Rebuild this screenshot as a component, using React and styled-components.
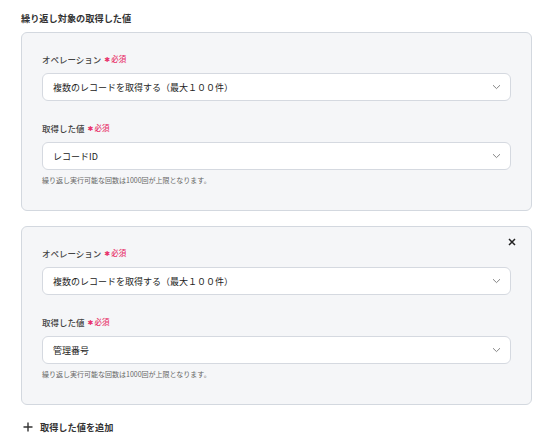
import styled, {createGlobalStyle} from "styled-components";

const GlobalStyle = createGlobalStyle`
  body {
    margin: 0;
    background: #fff;
    font-family: "Noto Sans CJK JP", "Noto Sans", sans-serif;
    color: #333;
  }
`;

const Page = styled.div`
  padding: 12px 19px 0 21px;
`;

const Title = styled.div`
  font-size: 9.2px;
  line-height: 12px;
  font-weight: 600;
  color: #333;
  margin-bottom: 8px;
`;

const Card = styled.div`
  position: relative;
  border: 1px solid #d3d8df;
  border-radius: 6px;
  background: #f5f6f8;
  padding: 20px 20px 25px 20px;
  display: flex;
  flex-direction: column;
  gap: 21px;
  & + & {
    margin-top: 15px;
  }
`;

const CloseButton = styled.button`
  position: absolute;
  top: 9px;
  right: 13px;
  width: 12px;
  height: 12px;
  padding: 0;
  border: none;
  background: none;
  display: flex;
  align-items: center;
  justify-content: center;
  cursor: pointer;
`;

const Field = styled.div`
  display: flex;
  flex-direction: column;
`;

const Label = styled.div`
  display: flex;
  align-items: center;
  font-size: 8.5px;
  line-height: 12px;
  font-weight: 500;
  color: #444;
  margin-bottom: 8px;
`;

const Required = styled.span`
  color: #e8336b;
  font-size: 7.5px;
  margin-left: 3px;
  display: flex;
  align-items: center;
  gap: 1px;
`;

const Asterisk = styled.span`
  font-family: "DejaVu Sans", sans-serif;
  font-size: 7px;
  line-height: 10px;
  position: relative;
  top: 0.5px;
`;

const Select = styled.div`
  height: 28px;
  box-sizing: border-box;
  border: 1px solid #d5d9e0;
  border-radius: 6px;
  background: #fff;
  display: flex;
  align-items: center;
  justify-content: space-between;
  padding: 0 9px 0 10px;
  font-size: 9px;
  color: #222;
`;

const Help = styled.div`
  font-size: 7px;
  line-height: 10px;
  color: #666;
  margin-top: 5px;
`;

const AddButton = styled.button`
  margin-top: 16px;
  display: flex;
  align-items: center;
  gap: 7px;
  padding: 0 0 0 2px;
  border: none;
  background: none;
  font-family: inherit;
  font-size: 9.2px;
  line-height: 12px;
  font-weight: 600;
  color: #333;
  cursor: pointer;
`;

function Chevron() {
  return (
    <svg width="9" height="6" viewBox="0 0 9 6" fill="none">
      <path d="M1 1.2 4.5 4.6 8 1.2" stroke="#777" strokeWidth="0.9" />
    </svg>
  );
}

function SelectField({label, value, help}) {
  return (
    <Field>
      <Label>
        {label}
        <Required>
          <Asterisk>✱</Asterisk>必須
        </Required>
      </Label>
      <Select>
        <span>{value}</span>
        <Chevron />
      </Select>
      {help && <Help>{help}</Help>}
    </Field>
  );
}

const HELP = "繰り返し実行可能な回数は1000回が上限となります。";
const OPERATION = "複数のレコードを取得する（最大１００件）";

const items = [
  {value: "レコードID", removable: false},
  {value: "管理番号", removable: true},
];

export default function App() {
  return (
    <>
      <GlobalStyle />
      <Page>
        <Title>繰り返し対象の取得した値</Title>
        {items.map((item, i) => (
          <Card key={i}>
            {item.removable && (
              <CloseButton aria-label="削除">
                <svg width="8" height="8" viewBox="0 0 8 8">
                  <path d="M1 1 7 7M7 1 1 7" stroke="#222" strokeWidth="1.5" />
                </svg>
              </CloseButton>
            )}
            <SelectField label="オペレーション" value={OPERATION} />
            <SelectField label="取得した値" value={item.value} help={HELP} />
          </Card>
        ))}
        <AddButton>
          <svg width="10" height="10" viewBox="0 0 10 10">
            <path d="M5 0.5v9M0.5 5h9" stroke="#333" strokeWidth="1.4" />
          </svg>
          取得した値を追加
        </AddButton>
      </Page>
    </>
  );
}
